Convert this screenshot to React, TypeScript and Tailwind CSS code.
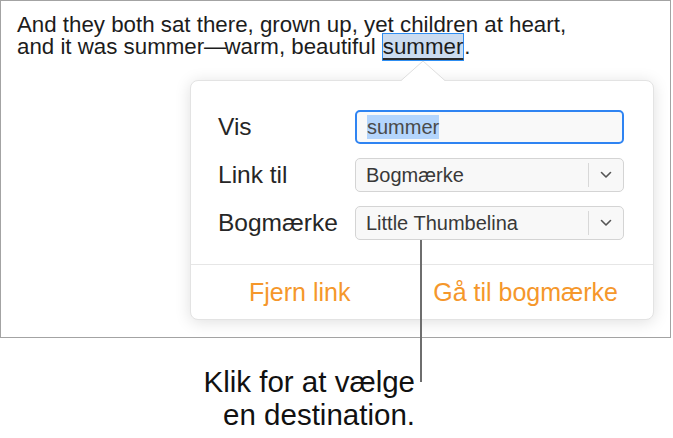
import React from "react";

const sans = { fontFamily: '"Liberation Sans", Arial, sans-serif' };

function Chevron() {
  return (
    <svg width="12" height="8" viewBox="0 0 12 8" aria-hidden>
      <path d="M1.5 1.5 L6 6 L10.5 1.5" fill="none" stroke="#555" strokeWidth="1.6" strokeLinecap="round" strokeLinejoin="round" />
    </svg>
  );
}

function Select({ value }: { value: string }) {
  return (
    <div className="flex h-[34px] w-[269px] items-center rounded-[5px] border border-[#d4d4d4] bg-[#f8f8f8]">
      <span className="flex-1 pl-[10px] text-[20px] text-[#383838]">{value}</span>
      <span className="h-[24px] w-px bg-[#d8d8d8]" />
      <span className="flex w-[34px] items-center justify-center">
        <Chevron />
      </span>
    </div>
  );
}

const rows = [
  { label: "Link til", value: "Bogmærke" },
  { label: "Bogmærke", value: "Little Thumbelina" },
];

export default function App() {
  return (
    <div className="relative h-[438px] w-[673px] overflow-hidden bg-white" style={sans}>
      <div className="h-[338px] w-[671px] border border-[#a3a3a3] bg-white pl-[16px] pt-[13px]">
        <p className="text-[22.3px] leading-[22px] text-[#1c1c1c]">
          And they both sat there, grown up, yet children at heart,
          <br />
          and it was summer<span className="tracking-[-4px]">—</span>
          <span className="pl-[2px]">warm, beautiful </span>
          <span className="border border-[#2e8ef2] bg-[#cbdcf0] pb-[1px] underline decoration-[#2a2a2a] decoration-2 underline-offset-[4px]">
            summer
          </span>
          .
        </p>
      </div>

      {/* popover */}
      <div className="absolute left-[190px] top-[80px] h-[240px] w-[464px] rounded-[8px] border border-[#e3e3e3] bg-white shadow-[0_2px_16px_rgba(0,0,0,0.13)]">
        <svg className="absolute left-[209px] top-[-21px]" width="46" height="22" viewBox="0 0 46 22" aria-hidden>
          <path d="M0 21.5 L23 1 L46 21.5" fill="#fff" stroke="#dedede" strokeWidth="1" />
          <rect x="0" y="21" width="46" height="2" fill="#fff" />
        </svg>

        <div className="flex flex-col gap-[14px] pl-[27px] pr-[29px] pt-[29px]">
          <div className="flex h-[34px] items-center">
            <span className="w-[137px] text-[24.5px] text-[#262626]">Vis</span>
            <div className="flex h-[34px] w-[269px] items-center rounded-[5px] border-2 border-[#2f84f2] bg-[#f9f9f9] pl-[10px]">
              <span className="bg-[#b4d5fd] text-[20px] leading-[24px] text-[#4a4a4a]">summer</span>
            </div>
          </div>
          {rows.map((row) => (
            <div key={row.label} className="flex h-[34px] items-center">
              <span className="w-[137px] text-[24.5px] text-[#262626]">{row.label}</span>
              <Select value={row.value} />
            </div>
          ))}
        </div>

        <div className="mt-[24px] border-t border-[#e6e6e6]" />
        <div className="flex h-[55px] items-center justify-between pl-[58px] pr-[35px] text-[25px] text-[#f5972b]">
          <span>Fjern link</span>
          <span>Gå til bogmærke</span>
        </div>
      </div>

      {/* callout */}
      <div className="absolute left-[420px] top-[240px] h-[142px] w-[2px] bg-[#6e6e6e]" />
      <div className="mt-[27px] w-[415px] text-right text-[29.5px] leading-[33px] text-[#111]">
        Klik for at vælge
        <br />
        en destination.
      </div>
    </div>
  );
}
